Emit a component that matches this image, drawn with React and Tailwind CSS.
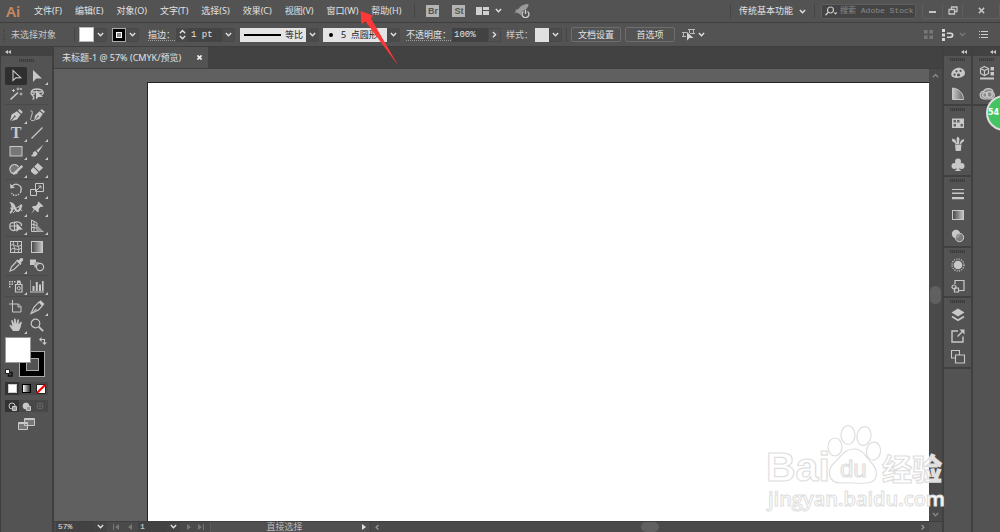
const menus = [
  "文件(F)",
  "编辑(E)",
  "对象(O)",
  "文字(T)",
  "选择(S)",
  "效果(C)",
  "视图(V)",
  "窗口(W)",
  "帮助(H)",
];

// All icons are drawn on a 16 x 16 grid.
const icons = {
  selection: <path d="M5 2.5v10l2.8-2.6 5-.2z" fill="none" stroke="currentColor" strokeWidth="1.1" />,
  direct: <path d="M4 2v12l3.3-3.4 5.7-.2z" />,
  wand: (
    <g fill="none" stroke="currentColor">
      <path d="M2.5 13.5 10 6.5" strokeWidth="1.7" />
      <path d="M10 1.500v3M8.500 3h3M13 6.500v3M11.500 8h3M5.500 3v3M4 4.500h3M13 2v2M12 3h2" strokeWidth=".9" />
    </g>
  ),
  lasso: (
    <g>
      <path d="M4.500 10C.5 8 1.500 3 8 3s7.500 4 4.500 6M6 8c-2-.5-3.500 1-1.800 2.300 1.400 1 .8 2.500-.7 3.200M3 6h10" fill="none" stroke="currentColor" strokeWidth="1.300" />
      <path d="M7 4v9.500l2.500-2.400 4.500-.2z" />
    </g>
  ),
  pen: <path d="m2 14 1.600-6.400L9 4.200l3.600 3.400L9 12.500l-5.600 1.400 3.200-3.600a.9.9 0 1 0-.7-.6zM10 3.400l1.500-1.500 3.300 3.200-1.500 1.600z" />,
  curvature: (
    <g>
      <path d="m5 14 1-5.500 4.500-4.200L13.800 7l-3.500 5-4.400 1.500 3-3.500a.8.8 0 1 0-.6-.5zM11.300 3.400l1.400-1.400L16 4.700l-1.400 1.500z" />
      <path d="M1.500 4C4.500 3 3 8 2 10.500s0 3.500 3 3" fill="none" stroke="currentColor" />
    </g>
  ),
  type: (
    <text x="8" y="13" textAnchor="middle" fontSize="16" fontWeight="700" fontFamily="Liberation Serif, serif">
      T
    </text>
  ),
  line: <path d="M2.500 13.500 13.500 2.500" fill="none" stroke="currentColor" strokeWidth="1.300" />,
  rect: <rect x="2" y="3.500" width="12" height="9.500" fill="#777" stroke="currentColor" />,
  brush: <path d="m14.500 1.500-7 6 1.800 1.900zM6.800 8.300c-2-.4-2.800 1-3 2.500-.2 1-1 1.700-2.300 2 3 1.500 6.600.5 7-2.400z" />,
  shaper: (
    <g>
      <path d="M9.500 11.500A4.600 4.600 0 1 1 10.500 6" fill="#777" stroke="currentColor" strokeWidth="1.200" />
      <path d="m5 14 .8-2.800L13.500 4l1.700 1.800-7.600 7.200z" />
    </g>
  ),
  eraser: <path d="M8.800 2 14 6.800 10.300 10.500 5.200 5.500zM4.400 6.300l5.100 5L7.300 13.500H5L2 10.500V8.700z" />,
  rotate: (
    <g fill="none" stroke="currentColor">
      <path d="M4 4.500A5 5 0 0 1 13 8.500c0 1-.3 1.800-.8 2.500" strokeWidth="1.300" />
      <path d="M11 12c-2 2-6 2-7.500-1" strokeWidth="1.300" strokeDasharray="1.500 1" />
      <path d="M2 1.800 2.500 6.500 7 5.800z" fill="currentColor" stroke="none" />
    </g>
  ),
  scale: <path d="M6.500 1.500h8v8h-8zM1.500 7.500h6v6h-6zM8 8l4-4M9.500 4H12v2.500" fill="none" stroke="currentColor" />,
  width: (
    <g fill="none" stroke="currentColor">
      <path d="M2 13c3-2 3-7 1.500-9.500C8 5 6 11 9.500 11S12 6 14 5" strokeWidth="2" />
      <path d="M2 8l5 1 6-4M5 13l3-3M10 6l4 5" />
    </g>
  ),
  pin: <path d="m9.500 1.500 5 4.800-1.600.6-1.200-.1-2 2.300.2 2.400-1.300.8-2.600-2.500L2 14l3-4.800-2-2 1-1.300 2.600.1 2.200-2.200-.1-1.200z" />,
  builder: (
    <g>
      <path d="M9 11.500C5 14 1 11.500 2 8c-1-2 1.500-4 4-3 3-2 8-1 7.500 3M2 8h8M6.500 3.500v9" fill="none" stroke="currentColor" strokeWidth="1.200" />
      <path d="M8.500 5v9l2.300-2.200 4-.2z" />
    </g>
  ),
  perspective: (
    <g fill="none" stroke="currentColor">
      <path d="M2.500 2v11.500h12M2.500 2 8 5v8.500M5 3.500v10M2.500 6 8 7.500M2.500 9.500 8 10" />
      <path d="m8 7 6.500 6.500H8z" fill="#999" stroke="none" />
    </g>
  ),
  mesh: (
    <g fill="none" stroke="currentColor">
      <rect x="2.500" y="2.500" width="11" height="11" />
      <path d="M2.500 7c3-4 5 3 11-1M2.500 11c4-4 6 2 11-2M6 2.500c-3 4 3 6 0 11M10 2.500c-2 4 3 6 0 11" />
    </g>
  ),
  gradient: <rect x="2.500" y="2.500" width="11" height="11" fill="url(#fade)" stroke="currentColor" />,
  eyedropper: (
    <g>
      <path d="M8.500 4.500 3.500 9.800 2 14l4-1.500 5.200-5.200" fill="none" stroke="currentColor" strokeWidth="1.200" />
      <path d="m8 3.500 1.500-1 1 .8 2-2c2-1 3.500 1 2.300 2.500l-2 2 .8 1-1.300 1.300z" />
    </g>
  ),
  blend: (
    <g>
      <path d="M1 2.500h6v5.500H1z" />
      <rect x="5" y="5" width="5.500" height="5.500" rx="1.500" fill="#aaa" />
      <circle cx="11" cy="10" r="3.600" fill="#555" stroke="currentColor" strokeWidth="1.200" />
    </g>
  ),
  spray: (
    <g>
      <path d="M7.500 6.500h6.500v7.500H7.500zM9.500 6V4.500h2.800V6" fill="none" stroke="currentColor" strokeWidth="1.200" />
      <path d="M9 2.500h3.500v1.500H9zM1 3h1.500v1.500H1zM3.500 3H5v1.500H3.500zM6 3h1.500v1.500H6zM1 5.500h1.500V7H1zM3.500 5.500H5V7H3.500zM1 8h1.500v1.500H1z" />
      <circle cx="10.800" cy="10.200" r="1.600" fill="none" stroke="currentColor" />
    </g>
  ),
  graph: <path d="M1.500 2v11.500H15v1H1V2zM3.500 8h2v5h-2zM6.800 4h2v9h-2zM10 6.500h2V13h-2zM13 3h1.600v10H13z" />,
  artboard: <path d="M4.500 1v12h8.500V7.500L10.500 5H1M10 5v3h3" fill="none" stroke="currentColor" />,
  slice: (
    <g>
      <path d="M2 14.500 5 8l5-5 3.500 3.500-4 4.500z" fill="none" stroke="currentColor" strokeWidth="1.200" />
      <path d="m9.800 3.300 1.700-2 4 3.700-2 2zM2 14.500l5-5 1 1z" />
    </g>
  ),
  hand: <path d="M5 14 2 9.500c-1.300-1.800.3-2.300 1.300-1.200L4.500 9.500 3.300 4.200c-.2-1.400 1.200-1.600 1.600-.4L6.200 7 6 2.500c0-1.500 1.600-1.500 1.700 0L8.300 7l1-4c.3-1.300 1.800-1 1.600.3L10.500 7.500l1.700-2.300c.8-1 2-.2 1.500.9-1 2.500-1 6-3 7.900z" />,
  zoom: (
    <g fill="none" stroke="currentColor">
      <circle cx="6.500" cy="6.500" r="4.300" strokeWidth="1.200" />
      <path d="m9.800 9.800 4.400 4.400" strokeWidth="1.900" />
    </g>
  ),
  palette: <path fillRule="evenodd" d="M7 3C3 4 .5 8 1.500 10.800 3 14 12 13.500 14.500 10 16.500 6 12 2 7 3zM4.500 8.500a1.100 1.100 0 1 0 .1 0zM6.500 5.200a1.100 1.100 0 1 0 .1 0zM10.500 4.700a1.100 1.100 0 1 0 .1 0zM8.500 8.500a1.500 1.500 0 1 0 .1 0z" />,
  guide: <path d="M2.500 2v11.500h11C13.500 7 8.500 2.500 2.500 2z" fill="url(#shade)" stroke="currentColor" />,
  swatches: (
    <g>
      <path d="M2 3.500h12v9.500H2z" />
      <path d="M3.500 5h2.500v2.500H3.500zM7 5h2.500v2.500H7zM3.500 9h2.500v2.500H3.500zM10.500 9H13v2.500h-2.500z" fill="#666" />
    </g>
  ),
  brushes: <path d="M5 8.500h6.500L10.800 15H5.700zM6 8 3.500 6 2 5l.3-2.500L5 3.500 7.500 8zM7.200 8l-.7-5.500L7.800.5 9.500 2.500 9 8zM9.500 8l1.500-3.500 2.500-1.500.7 2-2 1.500L11 8z" />,
  symbols: (
    <g>
      <circle cx="8" cy="4.500" r="3" />
      <circle cx="4.500" cy="9" r="3" />
      <circle cx="11.500" cy="9" r="3" />
      <path d="M7 7h2l.4 5.500 2 1.500H4.600l2-1.500z" />
    </g>
  ),
  stroke: <path d="M2 3h12v1H2zM2 6.500h12V8H2zM2 11h12v2.300H2z" />,
  gradientPanel: <rect x="2.500" y="3.500" width="11" height="9" fill="url(#fade)" stroke="currentColor" />,
  transparency: (
    <g>
      <circle cx="6" cy="6" r="4.200" />
      <circle cx="9.500" cy="9.500" r="4.200" fill="#888" fillOpacity=".8" stroke="currentColor" />
    </g>
  ),
  appearance: (
    <g>
      <circle cx="8" cy="8" r="4.300" />
      <circle cx="8" cy="8" r="6" fill="none" stroke="currentColor" strokeWidth="1.200" strokeDasharray="1.200 1.150" />
    </g>
  ),
  graphicStyles: (
    <g fill="none" stroke="currentColor" strokeWidth="1.200">
      <path d="M5 6V2.500h9v10H9" />
      <circle cx="4" cy="9" r="2" />
      <path d="M4.500 10h4v4h-4z" />
    </g>
  ),
  layers: (
    <g>
      <path d="m8 1.500 6.500 4L8 9.500l-6.500-4z" />
      <path d="m2 9.500 6 3.700 6-3.700" fill="none" stroke="currentColor" strokeWidth="1.800" />
    </g>
  ),
  assets: (
    <g>
      <path d="M8 3H2v11h11V8.500M7.500 8.500l5-5" fill="none" stroke="currentColor" strokeWidth="1.400" />
      <path d="M9.500 1.500h5v5z" />
    </g>
  ),
  artboards: <path d="M5.500 9H1.500V1.500h8V6M5.500 6h9v8h-9z" fill="none" stroke="currentColor" strokeWidth="1.100" />,
  libraries: (
    <g>
      <path d="m5.500 1.500 4 2v5l-4 2-4-2v-5zM1.500 3.500l4 2 4-2M5.500 5.500v5" fill="none" stroke="currentColor" strokeWidth="1.200" />
      <path d="M11.500 2H15v3.500h-3.500zM11.500 7H15v3.500h-3.500zM1 12.500h14v2H1z" />
    </g>
  ),
  cloud: (
    <g fill="none" stroke="currentColor">
      <path d="M5 13c-5.500-.5-4.500-8-.5-7.500C7 1 14 2 14 6.500c3 2.500.5 6.500-2.500 6.500z" fill="#8a8a8a" strokeWidth="1.200" />
      <circle cx="6" cy="9" r="2.300" strokeWidth="1.300" />
      <circle cx="10.500" cy="8.500" r="2.800" strokeWidth="1.300" />
    </g>
  ),
};

const toolGroups = [
  [["selection", "direct"], ["wand", "lasso"]],
  [["pen", "curvature"], ["type", "line"], ["rect", "brush"], ["shaper", "eraser"]],
  [["rotate", "scale"], ["width", "pin"], ["builder", "perspective"]],
  [["mesh", "gradient"], ["eyedropper", "blend"]],
  [["spray", "graph"]],
  [["artboard", "slice"], ["hand", "zoom"]],
];

// Tools without a fly-out have no corner mark.
const single = ["selection", "wand", "lasso", "curvature", "mesh", "gradient", "blend", "artboard", "zoom"];

const panelGroups = [
  ["palette", "guide"],
  ["swatches", "brushes", "symbols"],
  ["stroke", "gradientPanel", "transparency"],
  ["appearance", "graphicStyles"],
  ["layers", "assets", "artboards"],
];

function Icon({ name }) {
  return (
    <svg viewBox="0 0 16 16" className="size-4" fill="currentColor" aria-hidden="true">
      {icons[name]}
    </svg>
  );
}

function Chevron({ className = "w-[7px]" }) {
  return (
    <svg viewBox="0 0 8 6" className={className} fill="none" stroke="currentColor" strokeWidth="1.600" aria-hidden="true">
      <path d="m1 1.200 3 3 3-3" />
    </svg>
  );
}

function DropButton({ label }) {
  return (
    <button aria-label={label} className="flex h-[14px] w-[13px] shrink-0 items-center justify-center rounded-r-xs border border-[#484848] bg-[#4d4d4d] text-[#e0e0e0]">
      <Chevron />
    </button>
  );
}

function Divider({ className = "" }) {
  return <span className={`h-[14px] w-px shrink-0 bg-[#454545] ${className}`} />;
}

function Grip() {
  return <div className="h-[3px] w-[15px] bg-[repeating-linear-gradient(90deg,#3c3c3c_0_1px,#4b4b4b_1px_2px)]" />;
}

function Collapse({ className = "" }) {
  return (
    <button aria-label="折叠面板" className={`flex h-[9px] w-full items-center text-[#c8c8c8] ${className}`}>
      <svg viewBox="0 0 6 4" className="h-1 w-[6px]" fill="currentColor">
        <path d="M3 0v4L0 2zM6 0v4L3 2z" />
      </svg>
    </button>
  );
}

function MenuBar() {
  return (
    <header className="flex h-[23px] shrink-0 items-center border-b border-[#3e3e3e]">
      <span className="w-7 shrink-0 pl-[6px] font-['Noto_Sans',sans-serif] text-[15px] leading-5 font-semibold text-[#c58a63]">Ai</span>
      <nav className="ml-[6px] flex shrink-0 gap-[13px] whitespace-nowrap">
        {menus.map((m) => (
          <button key={m}>{m}</button>
        ))}
      </nav>
      <Divider className="ml-[13px]" />
      <button className="ml-[11px] h-3 w-[13px] bg-[#b4b4b4] text-center font-['Liberation_Sans',sans-serif] leading-3 font-bold text-[#555]">Br</button>
      <button className="ml-[13px] h-3 w-[13px] bg-[#b4b4b4] text-center font-['Liberation_Sans',sans-serif] leading-3 font-bold text-[#555]">St</button>
      <button aria-label="排列文档" className="ml-[11px] flex items-center gap-[6px]">
        <svg viewBox="0 0 13 8" className="h-2 w-[13px]" fill="#d0d0d0">
          <path d="M0 0h6v8H0zM7 0h6v3H7zM7 4h6v4H7z" />
        </svg>
        <Chevron />
      </button>
      <button aria-label="GPU 性能" className="ml-3">
        <svg viewBox="0 0 16 14" className="h-[14px] w-4" fill="#9a9a9a">
          <path d="M14.500 0C9 0 6 2.500 4.500 5L1 6l1.500 1L0 8.500l3.500.2L7 11c-.2-3 2-5 4.500-5.200C13.500 4 14.500 2 14.500 0z" />
          <path d="M9.500 7.500a3.400 3.400 0 1 0 4 0M11.500 6v4" fill="none" stroke="#d0d0d0" strokeWidth="1.300" />
        </svg>
      </button>
      <div className="ml-auto flex shrink-0 items-center">
        <Divider />
        <button className="ml-2 flex items-center gap-[6px] whitespace-nowrap">
          传统基本功能
          <Chevron className="mt-[2px] w-[7px]" />
        </button>
        <Divider className="ml-2" />
        <label className="ml-[6px] flex h-[15px] w-[95px] items-center rounded-xs border border-[#5e5e5e] bg-[#444] pl-[3px]">
          <svg viewBox="0 0 13 10" className="h-[10px] w-[13px] shrink-0" fill="none" stroke="#c8c8c8" role="img" aria-label="搜索">
            <circle cx="5.500" cy="4" r="3" strokeWidth="1.200" />
            <path d="M3.300 6.200.5 9.200" strokeWidth="1.400" />
            <path d="M8.500 6.500h4l-2 2.200z" fill="#c8c8c8" stroke="none" />
          </svg>
          <input
            placeholder="搜索 Adobe Stock"
            className="ml-[2px] w-full min-w-0 bg-transparent font-['Liberation_Mono','Noto_Sans_CJK_SC',monospace] text-[8px] outline-none placeholder:text-[#8a8a8a]"
          />
        </label>
        <div className="ml-[6px] flex h-[15px] w-[78px] self-start rounded-b-xs border border-t-0 border-[#5e5e5e] text-[#c4c4c4]">
          <button aria-label="最小化" className="flex w-5 items-center justify-center border-r border-[#5e5e5e]">
            <span className="mt-[2px] h-[2px] w-[7px] bg-[#c4c4c4]" />
          </button>
          <button aria-label="还原" className="flex w-5 items-center justify-center border-r border-[#5e5e5e]">
            <svg viewBox="0 0 10 9" className="h-[9px] w-[10px]" fill="none" stroke="currentColor" strokeWidth="1.300">
              <path d="M3.500 3V1H9v4.500H6.500M1 3.500h5.500V8H1z" />
            </svg>
          </button>
          <button aria-label="关闭" className="flex flex-1 items-center justify-center">
            <svg viewBox="0 0 8 8" className="size-[7px]" stroke="currentColor" strokeWidth="1.700">
              <path d="m1 1 6 6M7 1 1 7" />
            </svg>
          </button>
        </div>
      </div>
    </header>
  );
}

function OptionsBar() {
  return (
    <section className="flex h-6 shrink-0 items-center border-b border-[#3e3e3e] whitespace-nowrap">
      <span className="ml-[3px] h-[14px] w-[2px] shrink-0 bg-[repeating-linear-gradient(0deg,#444_0_1px,#555_1px_2px)]" />
      <span className="ml-[6px] w-[60px] shrink-0 text-[#c8c8c8]">未选择对象</span>
      <Divider className="ml-[3px]" />
      <button aria-label="填色" className="ml-1 size-[15px] shrink-0 border border-[#bbb] bg-white" />
      <DropButton label="填色选项" />
      <button aria-label="描边颜色" className="ml-[5px] flex size-[14px] shrink-0 items-center justify-center border border-[#aaa] bg-black">
        <span className="flex size-[6px] items-center justify-center border border-white bg-[#888]" />
      </button>
      <DropButton label="描边颜色选项" />
      <label htmlFor="weight" className="ml-[9px] w-7 shrink-0 underline decoration-[#999] decoration-dotted underline-offset-2">
        描边：
      </label>
      <span className="flex h-[14px] w-3 shrink-0 flex-col items-center justify-between bg-[#484848] py-px">
        <button aria-label="增大" className="rotate-180">
          <Chevron className="w-[7px]" />
        </button>
        <button aria-label="减小">
          <Chevron className="w-[7px]" />
        </button>
      </span>
      <input
        id="weight"
        defaultValue="1 pt"
        className="h-[14px] w-[34px] shrink-0 bg-[#444] pl-[3px] font-['Liberation_Mono',monospace] outline-none"
      />
      <DropButton label="描边粗细选项" />

      <span className="relative ml-[5px] flex h-[14px] w-[79px] shrink-0 items-center">
        <select aria-label="宽度配置文件" className="size-full appearance-none rounded-none bg-[#e4e4e4] pl-[45px] text-[#222] outline-none">
          <option>等比</option>
        </select>
        <span className="pointer-events-none absolute left-1 h-[2px] w-[37px] bg-black" />
        <span className="pointer-events-none absolute right-0 flex h-[14px] w-[13px] items-center justify-center bg-[#4b4b4b]">
          <Chevron />
        </span>
      </span>

      <span className="relative ml-1 flex h-[14px] w-[77px] shrink-0 items-center">
        <select aria-label="画笔定义" className="size-full appearance-none rounded-none bg-[#e4e4e4] pl-[18px] text-[#222] outline-none">
          <option>5&nbsp; 点圆形</option>
        </select>
        <span className="pointer-events-none absolute left-[6px] size-1 rounded-full bg-black" />
        <span className="pointer-events-none absolute right-0 flex h-[14px] w-[13px] items-center justify-center bg-[#4b4b4b]">
          <Chevron />
        </span>
      </span>

      <label htmlFor="opacity" className="ml-[6px] w-[46px] shrink-0 underline decoration-[#999] decoration-dotted underline-offset-2">
        不透明度：
      </label>
      <input
        id="opacity"
        defaultValue="100%"
        className="h-[14px] w-9 shrink-0 bg-[#424242] pl-[2px] font-['Liberation_Mono',monospace] outline-none"
      />
      <button aria-label="不透明度滑块" className="flex h-[14px] w-[13px] shrink-0 items-center justify-center border border-[#484848]">
        <Chevron className="w-[7px] -rotate-90" />
      </button>
      <span className="ml-[5px] w-7 shrink-0 text-[#ccc]">样式：</span>
      <button aria-label="图形样式" className="ml-[1px] size-[14px] shrink-0 bg-[#e0e0e0]" />
      <DropButton label="图形样式选项" />
      <Divider className="ml-1" />
      <button className="ml-[4px] h-[15px] w-[50px] shrink-0 rounded-xs border border-[#6e6e6e]">文档设置</button>
      <button className="ml-1 h-[15px] w-[50px] shrink-0 rounded-xs border border-[#6e6e6e]">首选项</button>
      <button aria-label="选择类似的对象" className="ml-[7px] flex shrink-0 items-center gap-[3px]">
        <svg viewBox="0 0 13 13" className="size-[13px]" fill="none" stroke="#bbb">
          <path d="M1.500 4v5M0 4.500h5M0 8.500h4M7.500 1v4M11.500 1v5M6 1.500h7M8 5.500h5" />
          <path d="M5 4v8.500l2.500-2.400 4-.1z" fill="#d4d4d4" stroke="none" />
        </svg>
        <Chevron />
      </button>
      <div className="mr-3 ml-auto flex shrink-0 items-center">
        <svg viewBox="0 0 10 10" className="size-[9px]" fill="#777" role="img" aria-label="隔离">
          <path d="M0 0h4v4H0zM6 0h4v4H6zM0 6h4v4H0zM6 6h4v4H6z" />
        </svg>
        <button aria-label="对齐" className="ml-[9px] flex items-center gap-[5px]">
          <svg viewBox="0 0 12 12" className="size-[12px]" fill="#d8d8d8">
            <path d="M0 0h3v3H0zM0 4.500h3v3H0zM0 9h3v3H0zM5 3.500h3.500C12.500 3.500 12.500 9 8.500 9H5V7.400h3.200c2 0 2-2.300 0-2.300H5z" />
          </svg>
          <Chevron className="w-[7px] text-[#777]" />
        </button>
        <button aria-label="面板菜单" className="ml-[13px]">
          <svg viewBox="0 0 9 7" className="h-[7px] w-[9px]" fill="#ccc">
            <path d="M0 0h1v1H0zM2 0h7v1H2zM0 3h1v1H0zM2 3h7v1H2zM0 6h1v1H0zM2 6h7v1H2z" />
          </svg>
        </button>
      </div>
    </section>
  );
}

function Tool({ name }) {
  return (
    <button
      aria-label={name}
      className={`relative flex h-[18px] w-[22px] items-center justify-center rounded-xs ${name === "selection" ? "bg-[#2f2f2f]" : ""}`}
    >
      <Icon name={name} />
      {!single.includes(name) && (
        <svg viewBox="0 0 3 3" className="absolute right-0 bottom-0 size-[3px]" fill="currentColor">
          <path d="M3 0v3H0z" />
        </svg>
      )}
    </button>
  );
}

function Toolbar() {
  return (
    <aside className="flex w-[54px] shrink-0 flex-col border-r-2 border-l border-[#3f3f3f] text-[#c8c8c8]">
      <Collapse className="bg-[#424242] pl-1" />
      <div className="flex h-[11px] justify-center pt-[3px]">
        <Grip />
      </div>
      <div className="mx-1 flex flex-col">
        {toolGroups.map((rows, i) => (
          <div key={i} className={i ? "mt-px border-t border-[#4a4a4a] pt-px" : ""}>
            {rows.map((row) => (
              <div key={row[0]} className="flex">
                {row.map((name) => (
                  <Tool key={name} name={name} />
                ))}
              </div>
            ))}
          </div>
        ))}
      </div>

      {/* Fill and stroke proxies overlap on a small stage */}
      <div className="relative mt-[3px] ml-1 h-10 w-10">
        <button aria-label="描边" className="absolute right-0 bottom-0 flex size-[26px] items-center justify-center border border-[#aaa] bg-black">
          <span className="size-[13px] border border-[#aaa] bg-[#535353]" />
        </button>
        <button aria-label="填色" className="absolute top-0 left-0 size-[26px] border border-[#999] bg-white" />
        <button aria-label="互换填色和描边" className="absolute top-0 right-[-2px]">
          <svg viewBox="0 0 8 8" className="size-2" fill="currentColor">
            <path d="M0 2.500 2.500 0v5zM5.500 8 3 5.500h5z" />
            <path d="M2 2.500h3.500V6" fill="none" stroke="currentColor" strokeWidth="1.100" />
          </svg>
        </button>
        <button aria-label="默认填色和描边" className="absolute bottom-0 left-0">
          <svg viewBox="0 0 8 8" className="size-2">
            <path d="M3.500 3.500h3.500V7H3.500z" fill="#555" stroke="#111" strokeWidth="1.500" />
            <path d="M.5.500h4v4h-4z" fill="#fff" stroke="#222" />
          </svg>
        </button>
      </div>

      <div className="mt-[5px] ml-1 flex h-[13px] w-[43px] bg-[#484848]">
        <button aria-label="颜色" className="flex flex-1 items-center justify-center bg-[#333]">
          <span className="size-[9px] border border-[#ccc] bg-white" />
        </button>
        <button aria-label="渐变" className="flex flex-1 items-center justify-center">
          <span className="size-[9px] border border-black bg-linear-to-r from-white to-[#333]" />
        </button>
        <button aria-label="无" className="flex flex-1 items-center justify-center">
          <svg viewBox="0 0 10 10" className="size-[10px]">
            <path d="M.5.500h9v9h-9z" fill="#fff" stroke="#222" />
            <path d="m1 9 8-8" stroke="#f00" strokeWidth="2.200" />
          </svg>
        </button>
      </div>
      <div className="mt-[5px] ml-1 flex h-3 w-[43px] bg-[#484848]">
        {["正常绘图", "背面绘图", "内部绘图"].map((label, i) => (
          <button
            key={label}
            aria-label={label}
            className={`flex flex-1 items-center justify-center ${i === 0 ? "bg-[#333]" : ""} ${i === 2 ? "text-[#6a6a6a]" : ""}`}
          >
            <svg viewBox="0 0 9 9" className="size-[9px]" fill="none" stroke="currentColor">
              <circle cx="4" cy="4" r="3" fill={i === 1 ? "currentColor" : "none"} />
              {i < 2 && <path d="M4.500 4.500h4v4h-4z" fill="#999" />}
              {i === 2 && <circle cx="4" cy="4" r=".8" />}
            </svg>
          </button>
        ))}
      </div>
      <button aria-label="更改屏幕模式" className="mt-[6px] ml-[17px] w-[17px]">
        <svg viewBox="0 0 17 12" className="h-3 w-[17px]" fill="#777" stroke="#c8c8c8">
          <path d="M.5 4.500h9v7h-9zM.5 5.500h9M6.500.500h10v7h-10zM6.500 1.500h10" />
        </svg>
      </button>
    </aside>
  );
}

function StatusBar() {
  return (
    <footer className="flex h-[11px] shrink-0 items-center border-t border-[#3f3f3f] bg-[#4a4a4a]">
      <input aria-label="缩放" defaultValue="57%" className="ml-[2px] h-[10px] w-[38px] bg-[#424242] pl-[2px] font-['Liberation_Mono',monospace] text-[8px] outline-none" />
      <button aria-label="缩放级别" className="flex h-[10px] w-[13px] items-center justify-center bg-[#444]">
        <Chevron />
      </button>
      <div className="flex w-[31px] justify-center gap-2 text-[#777]">
        <button aria-label="首项">
          <svg viewBox="0 0 6 6" className="size-[6px]" fill="currentColor"><path d="M0 0h1v6H0zM6 0v6L2 3z" /></svg>
        </button>
        <button aria-label="上一项">
          <svg viewBox="0 0 6 6" className="size-[6px]" fill="currentColor"><path d="M5 0v6L1 3z" /></svg>
        </button>
      </div>
      <input aria-label="画板" defaultValue="1" className="h-[10px] w-[29px] bg-[#424242] pl-[2px] font-['Liberation_Mono',monospace] text-[8px] outline-none" />
      <button aria-label="画板列表" className="flex h-[10px] w-[13px] items-center justify-center bg-[#444]">
        <Chevron />
      </button>
      <div className="flex w-[30px] justify-center gap-[6px] text-[#777]">
        <button aria-label="下一项">
          <svg viewBox="0 0 6 6" className="size-[6px]" fill="currentColor"><path d="M1 0v6l4-3z" /></svg>
        </button>
        <button aria-label="末项">
          <svg viewBox="0 0 6 6" className="size-[6px]" fill="currentColor"><path d="M0 0v6l4-3zM5 0h1v6H5z" /></svg>
        </button>
      </div>
      <span className="w-[148px] border-l border-[#5a5a5a] bg-[#505050] text-center leading-[10px] text-[#bbb]">直接选择</span>
      <button aria-label="状态栏选项" className="flex h-[10px] w-3 items-center justify-center bg-[#505050]">
        <svg viewBox="0 0 6 6" className="size-[6px]" fill="currentColor"><path d="M1 0v6l4-3z" /></svg>
      </button>
      <div className="flex h-[10px] flex-1 items-center justify-between border-l border-[#424242] px-[3px] text-[#999]">
        <button aria-label="向左滚动"><Chevron className="w-[6px] rotate-90" /></button>
        <span className="h-[10px] w-[18px] rounded-full bg-[#606060]" />
        <button aria-label="向右滚动"><Chevron className="w-[6px] -rotate-90" /></button>
      </div>
      <span className="w-[13px] self-stretch bg-[#505050]" />
    </footer>
  );
}

function Workspace() {
  return (
    <main className="flex min-w-0 flex-1 flex-col">
      <div className="flex h-[22px] shrink-0 border-b border-[#3f3f3f] bg-[#424242]">
        <div className="flex items-center gap-4 bg-[#535353] pr-[6px] pl-2 whitespace-nowrap">
          未标题-1 @ 57% (CMYK/预览)
          <button aria-label="关闭文档">
            <svg viewBox="0 0 6 6" className="size-[5px]" stroke="#eee" strokeWidth="2">
              <path d="m.5.500 5 5M5.500.500l-5 5" />
            </svg>
          </button>
        </div>
      </div>
      <div className="flex min-h-0 flex-1 bg-[#606060]">
        <div className="flex min-w-0 flex-1 pt-[13px] pl-[93px]">
          <div className="flex-1 border-t border-l border-[#222] bg-white" />
        </div>
        <div className="flex w-[13px] flex-col items-center justify-between bg-[#4a4a4a] py-1 text-[#888]">
          <button aria-label="向上滚动"><Chevron className="w-[7px] rotate-180" /></button>
          <span className="h-[18px] w-[11px] rounded-full bg-[#606060]" />
          <button aria-label="向下滚动"><Chevron /></button>
        </div>
      </div>
      <StatusBar />
    </main>
  );
}

function PanelGroup({ names }) {
  return (
    <div className="flex flex-col items-center border-b-2 border-[#404040] text-[#c8c8c8]">
      <div className="h-[6px] pt-[2px]">
        <Grip />
      </div>
      {names.map((name) => (
        <button key={name} aria-label={name} className="flex h-[21px] w-full items-center justify-center">
          <Icon name={name} />
        </button>
      ))}
    </div>
  );
}

function Docks() {
  return (
    <aside className="flex shrink-0 border-l-2 border-[#404040]">
      <div className="w-[27px]">
        <Collapse className="justify-end bg-[#424242] pr-1" />
        {panelGroups.map((names) => (
          <PanelGroup key={names[0]} names={names} />
        ))}
      </div>
      <div className="w-[29px] border-l-2 border-[#404040]">
        <Collapse className="justify-end bg-[#424242] pr-1" />
        <PanelGroup names={["libraries", "cloud"]} />
      </div>
    </aside>
  );
}

function Watermark() {
  return (
    <svg viewBox="0 0 190 90" className="pointer-events-none absolute right-[50px] bottom-[19px] h-[90px] w-[190px]" fill="#fff" stroke="#dedede" strokeWidth="1.200" role="img" aria-label="Baidu 经验">
      <text x="6" y="58" fontSize="41" fontFamily="Liberation Sans, sans-serif" fontWeight="700">Bai</text>
      <ellipse cx="75" cy="24" rx="7" ry="9" />
      <ellipse cx="88" cy="12" rx="7" ry="9.500" />
      <ellipse cx="104" cy="13" rx="7" ry="9.500" transform="rotate(10 104 13)" />
      <ellipse cx="113.500" cy="28" rx="7" ry="9" transform="rotate(8 113 28)" />
      <path d="M94 26c9 0 11 7 16 12 9 9 9 21-3 22-8 1-18-1-26 0-13 0-15-13-6-21 6-5 9-13 19-13z" />
      <text x="80" y="54" fontSize="24" fontFamily="Liberation Sans, sans-serif">du</text>
      <text x="122" y="57" fontSize="30" fontFamily="Noto Sans CJK SC, sans-serif" fontWeight="700" fillOpacity=".85">经验</text>
      <text x="8" y="83" fontSize="20" fontFamily="Open Sans, sans-serif" fontWeight="600" strokeWidth="1">jingyan.baidu.com</text>
    </svg>
  );
}

export default function App() {
  return (
    <div className="relative flex h-screen flex-col overflow-hidden bg-[#535353] font-['Noto_Sans','Noto_Sans_CJK_SC',sans-serif] text-[9px] leading-3 text-[#e2e2e2]">
      <svg className="absolute size-0" aria-hidden="true">
        <defs>
          <linearGradient id="fade">
            <stop offset="0" stopColor="#444" />
            <stop offset="1" stopColor="#c8c8c8" />
          </linearGradient>
          <linearGradient id="shade">
            <stop offset="0" stopColor="#c8c8c8" />
            <stop offset="1" stopColor="#666" />
          </linearGradient>
        </defs>
      </svg>
      <MenuBar />
      <OptionsBar />
      <div className="flex min-h-0 flex-1">
        <Toolbar />
        <Workspace />
        <Docks />
      </div>
      <Watermark />

      {/* Pointer at the window menu */}
      <svg viewBox="0 0 40 56" className="pointer-events-none absolute top-[11px] left-[360px] h-14 w-10" fill="#fb3838">
        <path d="M.5 0 13 4.500 11 7.500 38.500 55 5.500 10.500 1.500 13z" />
      </svg>
      <div className="absolute top-[95px] right-[-22px] flex size-9 items-center rounded-full border-2 border-[#ddd] bg-[#43c463] font-['DejaVu_Sans',sans-serif] text-[8px] font-bold text-white">
        54
      </div>
    </div>
  );
}
